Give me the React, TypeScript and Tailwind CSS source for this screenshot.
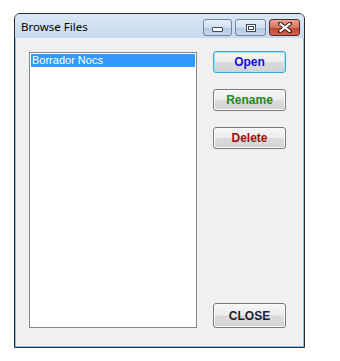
import React from 'react';

type Btn = { label: string; color: string; focused?: boolean };

const BUTTONS: Btn[] = [
  { label: 'Open', color: 'text-[#1010d8]', focused: true },
  { label: 'Rename', color: 'text-[#1c8a1c]' },
  { label: 'Delete', color: 'text-[#9c1010]' },
];

function WinButton({ label, color, focused, tall }: Btn & { tall?: boolean }) {
  return (
    <button
      className={`w-[73px] ${tall ? 'h-[25px]' : 'h-[22px]'} rounded-[3px] border ${
        focused
          ? 'border-[#3aa6d8] shadow-[inset_0_0_0_1px_#9fe3fb]'
          : 'border-[#7a7a7a] shadow-[inset_0_0_0_1px_#fbfbfb]'
      } bg-[linear-gradient(to_bottom,#f6f6f6_0%,#ececec_48%,#dcdcdc_52%,#d2d2d2_100%)] text-[12px] font-bold ${color} flex items-center justify-center`}
      style={{ fontFamily: '"Liberation Sans", Arial, sans-serif' }}
    >
      {label}
    </button>
  );
}

function CaptionButtons() {
  return (
    <div className="flex items-start gap-[3px] mt-[5px]">
      <div className="w-[29px] h-[17px] rounded-[3px] border border-[#6f839c] bg-[linear-gradient(to_bottom,#e6eef8_0%,#d2dfee_50%,#b4c8e0_52%,#c6d8ec_100%)] flex items-center justify-center">
        <div className="w-[11px] h-[5px] mt-[3px] bg-white border border-[#3d4a5c] rounded-[1px]" />
      </div>
      <div className="w-[31px] h-[17px] rounded-[3px] border border-[#6f839c] bg-[linear-gradient(to_bottom,#e6eef8_0%,#d2dfee_50%,#b4c8e0_52%,#c6d8ec_100%)] flex items-center justify-center">
        <div className="w-[10px] h-[8px] bg-white border border-[#3d4a5c] flex items-center justify-center">
          <div className="w-[6px] h-[4px] border border-[#3d4a5c]" />
        </div>
      </div>
      <div className="w-[31px] h-[17px] rounded-[3px] border border-[#5a2a22] bg-[linear-gradient(to_bottom,#e8a493_0%,#d47560_50%,#c0432c_52%,#d0644a_100%)] flex items-center justify-center">
        <svg width="14" height="11" viewBox="0 0 14 11">
          <path d="M2 1.5 L12 9.5 M12 1.5 L2 9.5" stroke="#3f1a14" strokeWidth="4" strokeLinecap="square" />
          <path d="M2.5 2 L11.5 9 M11.5 2 L2.5 9" stroke="#ffffff" strokeWidth="2.2" strokeLinecap="square" />
        </svg>
      </div>
    </div>
  );
}

export default function App() {
  return (
    <div className="w-[340px] h-[361px] bg-white pt-[13px] pl-[14px]">
      <div className="w-[291px] h-[335px] border border-[#2a2a2a] rounded-t-[6px] flex flex-col bg-[#bdd3ec] overflow-hidden">
        <div className="h-[24px] flex items-start justify-between pl-[6px] pr-[4px] bg-[linear-gradient(to_bottom,#dbe7f4_0%,#c6d9ee_100%)]">
          <span
            className="text-[11.5px] text-black mt-[4px]"
            style={{ fontFamily: '"Noto Sans", "Open Sans", sans-serif' }}
          >
            Browse Files
          </span>
          <CaptionButtons />
        </div>
        <div className="flex-1 border border-t-0 border-[#7cc4ec] bg-[#f0f0f0] flex pl-[13px] pt-[14px] pb-[17px]">
          <div className="w-[168px] h-[276px] border border-[#828790] bg-white p-[1px]">
            <div
              className="h-[13px] bg-[#3399ff] text-white text-[11px] leading-[13px] pl-[1px]"
              style={{ fontFamily: '"Liberation Sans", Arial, sans-serif' }}
            >
              Borrador Nocs
            </div>
          </div>
          <div className="ml-[16px] flex flex-col">
            <div className="mt-[-1px] flex flex-col gap-[16px]">
              {BUTTONS.map((b) => (
                <WinButton key={b.label} {...b} />
              ))}
            </div>
            <div className="mt-auto mb-[1px]">
              <WinButton label="CLOSE" color="text-[#1c1c38]" tall />
            </div>
          </div>
        </div>
      </div>
    </div>
  );
}
